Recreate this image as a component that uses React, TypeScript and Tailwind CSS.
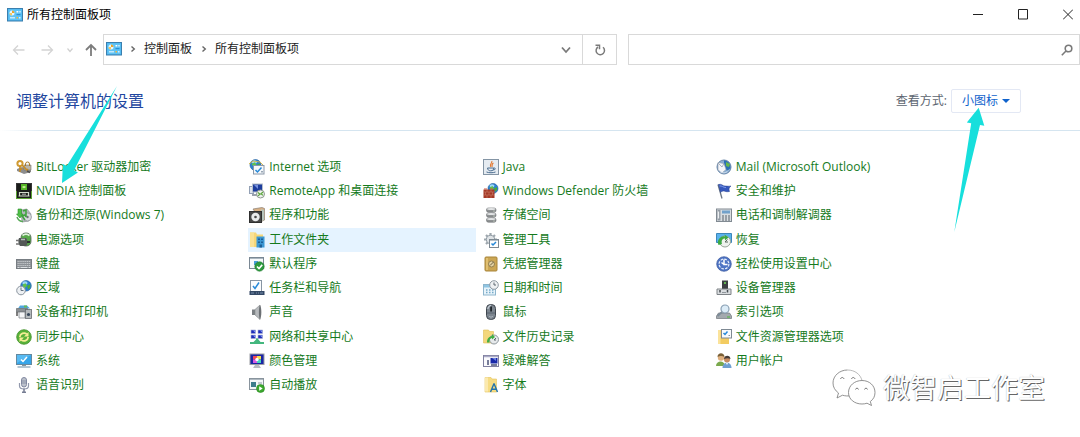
import type { ReactNode } from "react";

function Icon({ children }: { children: ReactNode }) {
  return (
    <svg viewBox="0 0 16 16" className="h-4 w-4 shrink-0" aria-hidden="true">
      {children}
    </svg>
  );
}

function PanelIcon() {
  return (
    <Icon>
      <rect x="0.5" y="1.5" width="15" height="12.5" fill="#4db4ee" stroke="#3b7fae" />
      <rect x="1.5" y="2.5" width="13" height="10.5" fill="#5fc3f5" />
      <circle cx="5" cy="6" r="2.5" fill="#e4f5ff" />
      <path d="M5 6V3.5A2.5 2.5 0 0 1 7.5 6z" fill="#e8a32a" />
      <path d="M2.5 6A2.5 2.5 0 0 0 5 8.5V6z" fill="#f3c860" />
      <rect x="9.5" y="4" width="1.5" height="1.5" fill="#fff" />
      <rect x="11.5" y="4" width="2.5" height="1.5" fill="#b5e2fb" />
      <rect x="9.5" y="7" width="4" height="1.2" fill="#2a8fd8" />
      <rect x="3" y="10" width="5" height="1.5" fill="#c5e9fd" />
      <rect x="9.5" y="10" width="1.5" height="1.5" fill="#f3b53a" />
      <rect x="12" y="10" width="1.5" height="1.5" fill="#d9f1ff" />
    </Icon>
  );
}

function Globe({ cx = 8, cy = 6, r = 5 }: { cx?: number; cy?: number; r?: number }) {
  return (
    <g>
      <circle cx={cx} cy={cy} r={r} fill="#2c7fd0" stroke="#1b5a9c" strokeWidth="0.6" />
      <ellipse cx={cx - r * 0.2} cy={cy - r * 0.55} rx={r * 0.5} ry={r * 0.3} fill="#9fd8f5" />
      <path
        d={`M${cx - r * 0.7} ${cy - r * 0.2}l${r * 0.6} ${-r * 0.3}l${r * 0.3} ${r * 0.5}l${-r * 0.5} ${r * 0.5}z`}
        fill="#5fc24a"
      />
      <path d={`M${cx + r * 0.2} ${cy}l${r * 0.6} ${-r * 0.3}v${r * 0.6}l${-r * 0.4} ${r * 0.4}z`} fill="#49ad3a" />
    </g>
  );
}

const check = (d: string, color = "#2789d8") => (
  <path d={d} fill="none" stroke={color} strokeWidth="1.5" />
);

type Entry = { name: string; icon: ReactNode; active?: boolean };

const entries: Entry[] = [
  {
    name: "BitLocker 驱动器加密",
    icon: (
      <>
        <path d="M1 10l5-2 9 2v3l-7 2-7-3z" fill="#8d8d8d" />
        <path d="M8 6h7v5H8z" fill="#b9b4a8" stroke="#77736a" strokeWidth="0.6" />
        <circle cx="4" cy="4.5" r="2.6" fill="none" stroke="#d09a32" strokeWidth="2" />
        <path d="M4 7v6M4 10h2.5M6 6l5 5 1-1" fill="none" stroke="#c48a25" strokeWidth="1.6" />
        <path d="M9.5 7V5a2 2 0 0 1 4 0v2" fill="none" stroke="#a87a2a" />
        <path d="M11 12l3 1.5" stroke="#4f4f4f" strokeWidth="1.5" />
      </>
    ),
  },
  {
    name: "Internet 选项",
    icon: (
      <>
        <Globe cx={6.5} cy={6} r={5.5} />
        <path d="M0 5l4-3 7 1 3 3" fill="none" stroke="#d2b64e" />
        <rect x="4.5" y="6.5" width="10.5" height="8.5" fill="#f5f8fb" stroke="#8a98a8" />
        {check("M6.5 11l2 2 4-4.5")}
        <rect x="12" y="12" width="2" height="1.5" fill="#9aa7b5" />
      </>
    ),
  },
  {
    name: "Java",
    icon: (
      <>
        <rect x="0.5" y="0.5" width="15" height="15" fill="#e5ebf1" stroke="#8495a5" />
        <path d="M8.8 2c1 2-3 3-1 6M10.4 4c-2 1-1.6 2.4-1.2 3.8" fill="none" stroke="#e4762c" strokeWidth="1.1" />
        <path d="M4.5 9h6.2c0 2-1 2.8-3 2.8S4.8 11 4.5 9zM10.7 9c2.5-.4 2 2-.6 2M3.5 13c2.5 1 6.5 1 9 0" fill="none" stroke="#4a6c8f" />
      </>
    ),
  },
  {
    name: "Mail (Microsoft Outlook)",
    icon: (
      <>
        <circle cx="8" cy="8" r="7" fill="#8aaed3" stroke="#6785a8" />
        <path d="M8 1.2a7 7 0 0 1 6.5 8L11 12 8 6z" fill="#2d70b5" />
        <path d="M10 3l4 2-1 3-3-1z" fill="#64b84c" />
        <path d="M2 3.5l6 1 2 6-4 3.5-4-3z" fill="#f4f6fa" stroke="#8d98a8" strokeWidth="0.6" />
        <path d="M2 4l4 4 2-3.5" fill="none" stroke="#8d98a8" strokeWidth="0.7" />
        <path d="M4 12.5c3 2 6.5 1.5 8-1" fill="none" stroke="#d9e4f0" />
      </>
    ),
  },
  {
    name: "NVIDIA 控制面板",
    icon: (
      <>
        <rect x="0.5" y="0.5" width="15" height="15" fill="#1a1c1a" stroke="#353535" />
        <path d="M0.5 15.5V8M15.5 15.5V8M0 15.5h16" stroke="#5aa033" />
        <rect x="5" y="1" width="6" height="6" fill="#55b526" />
        <path d="M6 4c1.200-1.500 2.800-1.500 4 0-1.200 1.500-2.800 1.500-4 0z" fill="#caf09c" />
        <path d="M3.500 13V9.500h9V13M2.500 13h11" fill="none" stroke="#d4dccd" strokeWidth="1.200" />
        <rect x="6" y="10.500" width="4" height="1.500" fill="#888" />
      </>
    ),
  },
  {
    name: "RemoteApp 和桌面连接",
    icon: (
      <>
        <rect x="0.5" y="3.5" width="4" height="7" fill="#dfe5ee" stroke="#93a0b5" />
        <rect x="3.5" y="1" width="10" height="8" fill="#1d3d9d" stroke="#b6bfcc" />
        <path d="M5 2h4v4z" fill="#7590df" />
        <path d="M3 11h8v2H3z" fill="#9aa2ad" />
        <circle cx="11.5" cy="11" r="4" fill="#eef1ee" stroke="#8f9990" />
        <path d="M9 9.500l2 1.700-2 1.700M14 9l-2 1.700 2 1.700" fill="none" stroke="#5ba63c" strokeWidth="1.200" />
      </>
    ),
  },
  {
    name: "Windows Defender 防火墙",
    icon: (
      <>
        <Globe cx={10} cy={5.5} r={5} />
        <path d="M0.5 6.500h11V15h-11z" fill="#a53a27" />
        <path d="M1 5.500h3v1H1zM7 5.500h3v1H7z" fill="#c95b45" />
        <path d="M0.5 9h11M0.5 12h11M4 6.500V9M8 6.500V9M2.500 9v3M6 9v3M9.500 9v3M4 12v3M8 12v3" stroke="#cf8573" strokeWidth="0.5" />
      </>
    ),
  },
  {
    name: "安全和维护",
    icon: (
      <>
        <path d="M2 1.500l4 14" stroke="#6c7684" strokeWidth="1.300" />
        <path d="M2.500 1.500c3-1 4 1.500 6.500 1.500 2 0 3.500.500 6 0-2 1.500-2.500 3-1.500 5.500-3 .500-4 0-5.500-.500-1.500 0-2.500.500-3.500 1.500z" fill="#3658bd" stroke="#27408f" strokeWidth="0.5" />
        <path d="M3.500 3c2.500-.500 3.500 1.500 6.500 1.500" fill="none" stroke="#7e9bea" />
      </>
    ),
  },
  {
    name: "备份和还原(Windows 7)",
    icon: (
      <>
        <path d="M5 3l6-1 4 5-2 7-7 1z" fill="#b4b9bd" stroke="#7f858a" strokeWidth="0.6" />
        <circle cx="11.5" cy="10" r="4" fill="#d7dadd" stroke="#868c91" strokeWidth="0.7" />
        <circle cx="11.5" cy="10" r="1.200" fill="#6c7277" />
        <path d="M2 2v5H.5L4 11l3-4H5.500V2z" fill="#4fbf46" stroke="#2b8d2b" strokeWidth="0.6" />
        <path d="M9 13L6 9l3-1 1 2V3l-3 1" fill="none" stroke="#3da43a" strokeWidth="1.500" />
        <path d="M1 10c1 3 3 4.500 6 4.500" fill="none" stroke="#57a957" strokeWidth="1.500" />
      </>
    ),
  },
  {
    name: "程序和功能",
    icon: (
      <>
        <path d="M4 2l9-1.500 2.500 1V13l-3 1.500z" fill="#d9b184" stroke="#8d8378" strokeWidth="0.7" />
        <path d="M12 2l3 1v10l-2 1z" fill="#b7c4bc" />
        <rect x="0.5" y="4.500" width="12" height="11" fill="#474747" stroke="#2f2f2f" />
        <circle cx="6.500" cy="10" r="4.200" fill="#e9ebec" />
        <circle cx="6.500" cy="10" r="1.300" fill="#474747" />
      </>
    ),
  },
  {
    name: "存储空间",
    icon: (
      <>
        {[1, 6, 11].map((y) => (
          <g key={y}>
            <rect x="3.500" y={y} width="9.500" height="4.200" rx="1.800" fill="#8f9294" stroke="#696d70" strokeWidth="0.6" />
            <ellipse cx="8.200" cy={y + 1} rx="4.200" ry="1.100" fill="#e2e4e5" />
            <circle cx="11" cy={y + 3} r="0.6" fill="#eafbe2" />
          </g>
        ))}
      </>
    ),
  },
  {
    name: "电话和调制解调器",
    icon: (
      <>
        <rect x="0.5" y="2" width="15" height="12.500" fill="#d8dde1" stroke="#818a92" />
        <rect x="1.500" y="3" width="3" height="10.500" fill="#939ca5" />
        <rect x="6" y="3.500" width="8" height="3" fill="#71a1cb" />
        <path d="M6 9h2M9 9h2M12 9h2M6 11h2M9 11h2M12 11h2M6 13h2M9 13h2M12 13h2" stroke="#59636c" />
        <path d="M2.500 4.500v7" stroke="#eef1f3" strokeWidth="1.200" />
      </>
    ),
  },
  {
    name: "电源选项",
    icon: (
      <>
        <rect x="5" y="1" width="10" height="13" rx="4.500" fill="#57a84a" stroke="#55615a" strokeWidth="0.8" />
        <path d="M6.500 3.500c2-1.500 5-1.500 7 0" stroke="#dff0dc" fill="none" strokeWidth="1.800" />
        <path d="M3 6h7c2 2 2 6 0 8H4c-2-2-2-6-1-8z" fill="#535857" />
        <path d="M5 7.500h4" stroke="#b5bcbb" strokeWidth="1.500" />
        <path d="M0 8.500h3M0 12h3" stroke="#777" strokeWidth="1.300" />
        <path d="M11 10h3" stroke="#2b3130" strokeWidth="2" />
      </>
    ),
  },
  {
    name: "工作文件夹",
    active: true,
    icon: (
      <>
        <path d="M1 0.5h6l1 2h6V15H1z" fill="#f7d778" />
        <path d="M1 0.5h4V15H1z" fill="#fbe294" />
        <rect x="7.500" y="4.500" width="8" height="11" fill="#3b97d3" />
        <path d="M9 6.500h2V8H9zM12 6.500h2V8h-2zM9 9.500h2V11H9zM12 9.500h2V11h-2zM10.500 12.500H13v3h-2.500z" fill="#1c5f97" />
      </>
    ),
  },
  {
    name: "管理工具",
    icon: (
      <>
        <path d="M7.500 1v13M1 7.500h13M3 3l9 9M12 3l-9 9" stroke="#9ea7ae" strokeWidth="2.200" />
        <circle cx="7.500" cy="7.500" r="4.200" fill="#dfe3e6" stroke="#939da5" />
        <rect x="6.500" y="7.500" width="9" height="8" fill="#fff" stroke="#7e8993" />
        <path d="M7 8.500h8" stroke="#b8c1c9" />
        {check("M8.500 11.500l1.500 1.500 3-3")}
      </>
    ),
  },
  {
    name: "恢复",
    icon: (
      <>
        <path d="M0.5 1.500h15v9h-15z" fill="#57b2ed" stroke="#3d86ba" />
        <circle cx="9" cy="9.500" r="5.500" fill="#eef2ee" stroke="#9aa59a" />
        <path d="M2.500 13A6 6 0 0 1 9 4.500l-.500-2 4 3-3.500 3V6.500c-3 0-4 2.500-3 5.500z" fill="#3da944" />
        <path d="M9 10l2.500-2.500M9 10h3" stroke="#5d6b60" />
      </>
    ),
  },
  {
    name: "键盘",
    icon: (
      <>
        <rect x="0.5" y="3.500" width="15" height="9" fill="#8b9095" stroke="#777d82" />
        <path d="M1.500 5.500h13M1.500 7.500h13M1.500 9.500h13" stroke="#c3c7ca" strokeDasharray="1.300 0.6" />
        <path d="M1.500 11.500h2M4.500 11.500h7M12.500 11.500h2" stroke="#dce0e3" />
      </>
    ),
  },
  {
    name: "默认程序",
    icon: (
      <>
        <rect x="0.5" y="1.500" width="14" height="11" fill="#f6f9fb" stroke="#7a8894" />
        <path d="M1 2.500h13" stroke="#aab6c0" />
        <rect x="5" y="5" width="4" height="4" fill="#499ed9" />
        <circle cx="10.500" cy="10.500" r="4.700" fill="#2c9a3d" stroke="#217a30" strokeWidth="0.6" />
        <path d="M8 10.500l2 2 3.200-3.600" fill="none" stroke="#fff" strokeWidth="1.600" />
      </>
    ),
  },
  {
    name: "凭据管理器",
    icon: (
      <>
        <rect x="2" y="1" width="12" height="14" rx="1" fill="#cba654" stroke="#a98538" />
        <path d="M3 2h2v12H3z" fill="#e0bf71" />
        <circle cx="8.500" cy="8" r="3" fill="#e3d2a4" stroke="#94804f" />
        <path d="M8.500 8l2-2M8.500 8l-1.500 1.500" stroke="#6d603f" />
      </>
    ),
  },
  {
    name: "轻松使用设置中心",
    icon: (
      <>
        <circle cx="8" cy="8" r="7.300" fill="#4f75c5" stroke="#3a589c" strokeWidth="0.7" />
        <circle cx="8" cy="8" r="4.900" fill="none" stroke="#e9effb" strokeWidth="1.200" strokeDasharray="2.600 1.200" />
        <path d="M8 3.500v5h3.500M8 8.500l-2.500-2" fill="none" stroke="#fff" strokeWidth="1.500" />
      </>
    ),
  },
  {
    name: "区域",
    icon: (
      <>
        <Globe cx={10} cy={5.8} r={5.3} />
        <circle cx="5" cy="10.500" r="4.300" fill="#edf0f3" stroke="#89939d" />
        <path d="M5 7.500v3h2.500" fill="none" stroke="#657481" />
      </>
    ),
  },
  {
    name: "任务栏和导航",
    icon: (
      <>
        <rect x="1.500" y="0.5" width="11" height="11" fill="#fafcfe" stroke="#8895a3" />
        {check("M4 6l2 2.500 4-6")}
        <rect x="0.5" y="11" width="15" height="4" fill="#344966" />
        <path d="M2 13h3M7 13h1M9 13h1M11 13h3" stroke="#7890ad" />
      </>
    ),
  },
  {
    name: "日期和时间",
    icon: (
      <>
        <rect x="0.5" y="4.500" width="12" height="10.500" fill="#e7f3fa" stroke="#8db5cd" />
        <rect x="1" y="5" width="11" height="2.500" fill="#8fc5e2" />
        <path d="M3 10h1.500M6 10h1.500M9 10h1.500M3 12.500h1.500M6 12.500h1.500M9 12.500h1.500" stroke="#75aac9" strokeWidth="1.300" />
        <circle cx="11" cy="5" r="4.300" fill="#eff1f3" stroke="#8f99a2" />
        <path d="M11 2.500V5h2" fill="none" stroke="#5e6871" />
      </>
    ),
  },
  {
    name: "设备管理器",
    icon: (
      <>
        <rect x="6" y="0.5" width="6" height="9" fill="#3c4042" />
        <rect x="8" y="2" width="2" height="2" fill="#62b452" />
        <path d="M1 9h14v5.500H1z" fill="#d9dcdf" stroke="#7e8387" />
        <path d="M4 10v2.500M11.500 10v2.500" stroke="#454b50" strokeWidth="1.500" />
        <path d="M6 12.500h4" stroke="#91989d" />
      </>
    ),
  },
  {
    name: "设备和打印机",
    icon: (
      <>
        <path d="M4 1.500h7l3 3H2z" fill="#4fa6dd" />
        <path d="M8 1.500h3v2H8z" fill="#65b956" />
        <path d="M0.5 4.500h11v3.500h-11z" fill="#8a8f93" stroke="#666b6f" strokeWidth="0.7" />
        <path d="M3 8h6v6H3z" fill="#f5f6f7" stroke="#777d82" strokeWidth="0.7" />
        <path d="M1 8v4" stroke="#555" strokeWidth="1.500" />
        <rect x="9.500" y="5.500" width="6" height="9" fill="#b5babd" stroke="#676c70" strokeWidth="0.8" />
        <circle cx="12.500" cy="10.500" r="1.600" fill="#37475a" />
      </>
    ),
  },
  {
    name: "声音",
    icon: (
      <>
        <path d="M3 5.500h3V11H3z" fill="#7b7f83" />
        <path d="M6 5.500L11 1v14.500L6 11z" fill="#b7babd" stroke="#85898c" strokeWidth="0.6" />
        <path d="M11 1c1.800 3 1.800 11 0 14.500-1.500-3-1.500-11 0-14.500z" fill="#6c7074" />
      </>
    ),
  },
  {
    name: "鼠标",
    icon: (
      <>
        <rect x="3.500" y="0.5" width="9" height="15" rx="4" fill="#7c858f" stroke="#3f464e" />
        <path d="M5 5V4c1-2 2-2.500 3-2.500" fill="none" stroke="#c0c9d2" strokeWidth="1.300" />
        <rect x="7.200" y="2.500" width="1.800" height="5" fill="#20262c" />
        <path d="M4 9h8" stroke="#59636e" />
        <path d="M6 12c1 1.500 3 1.500 4 0" stroke="#aab3bd" fill="none" />
      </>
    ),
  },
  {
    name: "索引选项",
    icon: (
      <>
        <path d="M2.500 9h11l2 3v2.500H.5V12z" fill="#a3a9ae" stroke="#70767b" strokeWidth="0.7" />
        <circle cx="9" cy="5" r="4" fill="#dcecf7" stroke="#8aa0b3" strokeWidth="1.200" />
        <path d="M6 8l-4.500 4" stroke="#7d8c98" strokeWidth="1.800" />
        <path d="M11 13h3" stroke="#59b94c" strokeWidth="1.200" />
      </>
    ),
  },
  {
    name: "同步中心",
    icon: (
      <>
        <circle cx="8" cy="8" r="7.300" fill="#58b13a" stroke="#42922a" strokeWidth="0.8" />
        <path d="M3.800 8a4.200 4.200 0 0 1 7-2.800M12.200 8a4.200 4.200 0 0 1-7 2.800" fill="none" stroke="#f4ed95" strokeWidth="1.800" />
        <path d="M12.500 3v4.500H8zM3.500 13V8.500H8z" fill="#f4ed95" />
      </>
    ),
  },
  {
    name: "网络和共享中心",
    icon: (
      <>
        {[[2, 1], [9, 1], [2, 6], [9, 6]].map(([x, y]) => (
          <g key={`${x}-${y}`}>
            <rect x={x} y={y} width="4.500" height="3.500" fill="#1c2cba" stroke="#a8afcf" strokeWidth="0.6" />
            <path d={`M${x + 2} ${y + 0.5}h2v2z`} fill="#889cf4" />
          </g>
        ))}
        <path d="M8 9v3" stroke="#5cae8b" strokeWidth="1.500" />
        <path d="M7.500 10h1.500l2.500 3H15v2H1v-2h3.500z" fill="#43b77e" />
      </>
    ),
  },
  {
    name: "文件历史记录",
    icon: (
      <>
        <path d="M0.5 1h5l1 1.500h4V14h-10z" fill="#f3d77c" stroke="#dfbd54" strokeWidth="0.6" />
        <circle cx="11" cy="10.500" r="4.500" fill="#e6e9eb" stroke="#8e979d" />
        <path d="M4 13.500c0-4 2-6 5-6.500V5l3 3-3 2.500V9c-2 .500-3 2-2.500 4.500z" fill="#41ae43" />
        <path d="M11 11l2-2M11 11h2" stroke="#5b666d" />
      </>
    ),
  },
  {
    name: "文件资源管理器选项",
    icon: (
      <>
        <path d="M2 1h5l1 2h5v12H2z" fill="#f3cc61" />
        <path d="M2 1h2.500v14H2z" fill="#fbe39b" />
        <rect x="5.500" y="0.5" width="10" height="8.500" fill="#f8fafc" stroke="#7e8993" />
        {check("M7.500 4l1.500 1.500 2.500-3")}
        <path d="M12.500 6.500h1.500" stroke="#8b97a3" />
      </>
    ),
  },
  {
    name: "系统",
    icon: (
      <>
        <rect x="0.5" y="1.500" width="15" height="10" fill="#36a5e9" stroke="#64899f" />
        <path d="M1 2h14L1 10z" fill="#58baf2" />
        {check("M5 6.500l2 2 4-4.500", "#fff")}
        <path d="M6 12h4v1H6z" fill="#86969f" />
        <path d="M1.500 14h13" stroke="#8aa7ba" strokeWidth="1.300" />
      </>
    ),
  },
  {
    name: "颜色管理",
    icon: (
      <>
        <rect x="1" y="1" width="14" height="10.500" fill="#1b25a5" stroke="#9c9ea4" />
        <path d="M4 3h4v3.500H4z" fill="#ef4a5a" />
        <path d="M8 3h4v3.500H8z" fill="#f4df48" />
        <path d="M4 6.500h4V10H4z" fill="#d65ce2" />
        <path d="M8 6.500h4V10H8z" fill="#45d4be" />
        <circle cx="8" cy="6.500" r="1.700" fill="#fff" />
        <path d="M6 12h4l2 3H4z" fill="#b8bbc1" />
      </>
    ),
  },
  {
    name: "疑难解答",
    icon: (
      <>
        <rect x="0.5" y="2.500" width="15" height="11" fill="#fafafd" stroke="#8080a0" />
        <path d="M1 3.500h14" stroke="#aaaac5" strokeWidth="1.500" />
        <rect x="7.500" y="5" width="7" height="5.500" fill="#1828a8" />
        <path d="M9 5h4v3z" fill="#6e82df" />
        <path d="M4 7h2v5H4zM8 11h6v2H8z" fill="#777d99" />
      </>
    ),
  },
  {
    name: "用户帐户",
    icon: (
      <>
        <circle cx="5" cy="4.500" r="3.200" fill="#dfb07e" />
        <path d="M1.500 4c0-5 7-5 7 0-2-1.500-5-1.500-7 0z" fill="#7a6037" />
        <path d="M0 13c0-6 9-6 9 0z" fill="#7aa94d" />
        <circle cx="11" cy="6.500" r="3" fill="#c78b61" />
        <path d="M8 6c0-4.500 6.500-4.500 6.500 0-2-1-4-1-6.500 0z" fill="#443b38" />
        <path d="M6.500 15c0-7 9-7 9 0z" fill="#6f9fd1" />
        <path d="M10 10l1 2 1-2z" fill="#fff" />
      </>
    ),
  },
  {
    name: "语音识别",
    icon: (
      <>
        <rect x="5.500" y="0.5" width="5" height="9.500" rx="2.500" fill="#bdc2cc" stroke="#8188a0" />
        <path d="M6 4h4M6 6h4" stroke="#8991a5" />
        <path d="M3.500 6v3c0 4 9 4 9 0V6" fill="none" stroke="#9299ad" strokeWidth="1.200" />
        <path d="M8 11.500V15M6 15.200h4" stroke="#777e94" strokeWidth="1.500" />
      </>
    ),
  },
  {
    name: "自动播放",
    icon: (
      <>
        <rect x="0.5" y="1.500" width="14" height="11" fill="#f3f6f8" stroke="#89949d" />
        <path d="M1 2.500h13" stroke="#aeb8c0" />
        <rect x="2" y="5" width="5" height="5" fill="#3c7c8c" />
        <path d="M9 6h4" stroke="#8e99a3" />
        <circle cx="11.500" cy="11.500" r="4" fill="#3ba82e" stroke="#2a8720" strokeWidth="0.6" />
        <path d="M10.200 9.300v4.400l3.500-2.200z" fill="#fff" />
      </>
    ),
  },
  {
    name: "字体",
    icon: (
      <>
        <path d="M2 0.5h6l1 1.500h4.500V15H2z" fill="#f6dc83" stroke="#e4c35c" strokeWidth="0.6" />
        <path d="M2 0.5h3v14H2z" fill="#fbe9ae" />
        <path d="M11 6.500l3.500 8.500M11 6.500L7.500 15M8.500 12.300h4.500" fill="none" stroke="#2474ad" strokeWidth="1.400" />
      </>
    ),
  },
];

function Chevron() {
  return (
    <svg viewBox="0 0 6 8" className="h-2 w-1.5 shrink-0" aria-hidden="true">
      <path d="M1.500 1.500L4.300 4 1.500 6.500" fill="none" stroke="#666" strokeWidth="1.400" />
    </svg>
  );
}

function TitleBar() {
  return (
    <header className="flex h-[29px] items-center justify-between pl-[7px] pr-[7px]">
      <div className="flex items-center gap-1 text-black">
        <PanelIcon />
        <h1 className="leading-4">所有控制面板项</h1>
      </div>
      <div className="flex gap-[35px]">
        <button type="button" aria-label="最小化" className="h-[11px] w-[10px]">
          <svg viewBox="0 0 10 11" className="h-[11px] w-[10px]">
            <path d="M0 5.500h10" stroke="#222" />
          </svg>
        </button>
        <button type="button" aria-label="最大化" className="h-[11px] w-[10px]">
          <svg viewBox="0 0 10 11" className="h-[11px] w-[10px]">
            <path d="M.5.5h9v9.500h-9z" fill="none" stroke="#222" />
          </svg>
        </button>
        <button type="button" aria-label="关闭" className="h-[11px] w-[10px]">
          <svg viewBox="0 0 10 11" className="h-[11px] w-[10px]">
            <path d="M0 .5l10 10M10 .5l-10 10" stroke="#222" />
          </svg>
        </button>
      </div>
    </header>
  );
}

function NavBar() {
  return (
    <div className="flex items-center pt-[5px]">
      <nav aria-label="导航" className="flex w-[103px] shrink-0 items-center pl-3">
        <button type="button" aria-label="后退" className="mr-4">
          <svg viewBox="0 0 13 12" className="h-3 w-[13px]" fill="none" stroke="#d4d4d4" strokeWidth="1.300">
            <path d="M12.500 6H1.500M6 1.500L1.500 6 6 10.500" />
          </svg>
        </button>
        <button type="button" aria-label="前进" className="mr-[13px]">
          <svg viewBox="0 0 13 12" className="h-3 w-[13px]" fill="none" stroke="#d4d4d4" strokeWidth="1.300">
            <path d="M.5 6h11M7 1.500L11.500 6 7 10.500" />
          </svg>
        </button>
        <button type="button" aria-label="最近浏览的位置" className="mr-3">
          <svg viewBox="0 0 6 6" className="h-1.5 w-1.5" fill="none" stroke="#d0d0d0" strokeWidth="1.200">
            <path d="M.5 1.500L3 4.500l2.500-3" />
          </svg>
        </button>
        <button type="button" aria-label="上移">
          <svg viewBox="0 0 12 14" className="h-3.5 w-3" fill="none" stroke="#7c7c7c" strokeWidth="1.800">
            <path d="M6 13V2M1 7l5-5 5 5" />
          </svg>
        </button>
      </nav>
      <div className="flex h-[31px] min-w-0 flex-[512_1_0%] border border-[#d9d9d9]">
        <div className="flex min-w-0 flex-1 items-center pb-0.5 pl-0.5 text-[#222]">
          <PanelIcon />
          <span className="flex w-[22px] justify-center">
            <Chevron />
          </span>
          <button type="button">控制面板</button>
          <span className="flex w-[23px] justify-center">
            <Chevron />
          </span>
          <button type="button">所有控制面板项</button>
        </div>
        <button type="button" aria-label="以前的位置" className="w-8 shrink-0">
          <svg viewBox="0 0 10 8" className="mx-auto h-2 w-2.5" fill="none" stroke="#7a7a7a" strokeWidth="1.800">
            <path d="M1 1.500l4 4.500 4-4.500" />
          </svg>
        </button>
        <button type="button" aria-label="刷新" className="w-[34px] shrink-0 border-l border-[#d9d9d9]">
          <svg viewBox="0 0 12 12" className="mx-auto h-3 w-3" fill="none" stroke="#7a7a7a" strokeWidth="1.500">
            <path d="M4 3A4.200 4.200 0 1 0 9 3.300" />
            <path d="M1.500 1.200h4v4" />
          </svg>
        </button>
      </div>
      <label className="ml-[11px] flex h-[31px] min-w-0 flex-[444_1_0%] items-center border border-[#d9d9d9] pr-1.5">
        <input type="search" aria-label="搜索控制面板" className="h-full min-w-0 flex-1 px-2 outline-none" />
        <svg viewBox="0 0 12 12" className="h-3 w-3 shrink-0" fill="none" stroke="#7a7a7a" strokeWidth="1.600">
          <circle cx="7.500" cy="4.500" r="3.300" />
          <path d="M5 7L.8 11.200" />
        </svg>
      </label>
    </div>
  );
}

function WeChatMark() {
  return (
    <svg viewBox="0 0 44 38" className="h-[38px] w-11" fill="#fff" stroke="#777" strokeWidth="0.8" aria-hidden="true">
      <path d="M15.500 1C7.500 1 1 6.800 1 14c0 4 2 7.500 5.500 10L5 29l5.500-2.800c2.500.8 5 .9 7.500.6" />
      <path d="M15.500 1C23 1 28.500 5.500 30 11.500" fill="none" stroke="#aaa" />
      <path d="M30 11.500c-7.500 0-13.500 5.200-13.500 12S22.500 35 30 35c2 0 3.500-.3 5-.8l4.500 2.300-1.200-4C41.500 30.300 43 27.200 43 23.500c0-6.800-5.500-12-13-12z" />
      <path d="M8.500 10c.5-2 3-2 3.500 0M19.500 10c.5-2 3-2 3.500 0M23.500 20.500c.5-1.800 2.500-1.800 3 0M32.500 20.500c.5-1.800 2.500-1.800 3 0" fill="none" stroke="#555" />
    </svg>
  );
}

export default function App() {
  return (
    <div className="relative min-h-screen bg-white font-['Open_Sans','Noto_Sans_CJK_SC',sans-serif] text-xs">
      <TitleBar />
      <NavBar />
      <main>
        <div className="flex h-[65px] items-center justify-between pl-4 pr-[59px] pt-1.5">
          <h2 className="text-base text-[#1f479f]">调整计算机的设置</h2>
          <div className="flex items-center gap-1">
            <label htmlFor="view" className="text-[#5c6570]">查看方式:</label>
            <div className="relative">
              <select
                id="view"
                defaultValue="small"
                className="block h-6 w-[70px] appearance-none rounded-xs border border-[#e3e8f4] bg-white pl-2.5 text-[#0f62cc]"
              >
                <option value="category">类别</option>
                <option value="large">大图标</option>
                <option value="small">小图标</option>
              </select>
              <svg viewBox="0 0 8 4" className="pointer-events-none absolute top-2.5 right-[11px] h-1 w-2">
                <path d="M0 0h8L4 4z" fill="#0f62cc" />
              </svg>
            </div>
          </div>
        </div>
        <div className="h-px bg-linear-to-r from-white via-[#d5e5f0] via-5% to-[#d5e5f0] to-95%" />
        <ul className="mt-6 mr-[138px] ml-[15px] grid h-[243px] grid-cols-4 grid-rows-10 gap-x-1.5">
          {entries.map(({ name, icon, active }) => (
            <li key={name} className={active ? "bg-[#e5f3ff]" : ""}>
              <a href="#" className="flex h-full items-center gap-1 pb-px pl-px whitespace-nowrap text-[#157a1c]">
                <Icon>{icon}</Icon>
                <span>{name}</span>
              </a>
            </li>
          ))}
        </ul>
      </main>
      <svg viewBox="0 0 56 98" className="pointer-events-none absolute top-[86px] left-[61px] h-[98px] w-14" aria-hidden="true">
        <path d="M56 0L13.100 84.300l3.800 2.100L1 97l.9-19 3.800 2.100z" fill="#17dfdc" />
      </svg>
      <svg viewBox="0 0 31 125" className="pointer-events-none absolute top-[107px] right-[95px] h-[125px] w-[31px]" aria-hidden="true">
        <path d="M.3 125l16.900-108.700-4.400-.7L24.700.7l5.600 18-4.300-.7z" fill="#17dfdc" />
      </svg>
      <div className="pointer-events-none absolute right-[35px] bottom-[29px] flex items-center gap-[7px]">
        <WeChatMark />
        <span className="text-[27px] leading-10 text-white [text-shadow:1px_1px_0_#666,0_0_1px_#aaa]">微智启工作室</span>
      </div>
    </div>
  );
}
